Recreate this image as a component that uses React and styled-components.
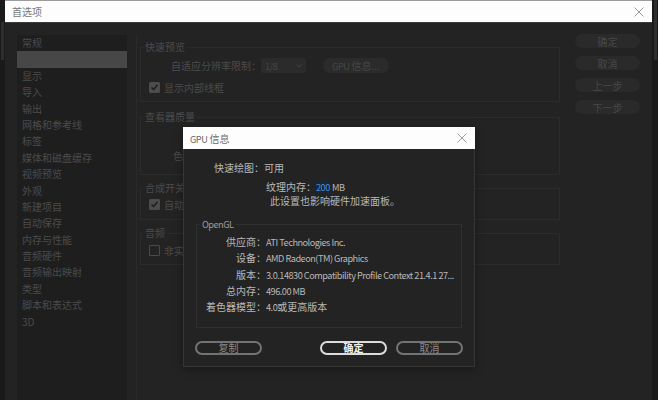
import React from "react";
import styled, { createGlobalStyle } from "styled-components";

const GlobalStyle = createGlobalStyle`
  html, body {
    margin: 0;
    padding: 0;
    background: #1b1b1b;
  }
  body {
    font-family: "Noto Sans CJK SC", "Noto Sans", sans-serif;
    font-size: 10px;
    overflow: hidden;
  }
`;

const navItems = [
    "常规", "预览", "显示", "导入", "输出", "网格和参考线", "标签", "媒体和磁盘缓存",
    "视频预览", "外观", "新建项目", "自动保存", "内存与性能", "音频硬件", "音频输出映射",
    "类型", "脚本和表达式", "3D",
];

const sideButtons = ["确定", "取消", "上一步", "下一步"];

// label, latin part, cjk part
const openGlRows = [
    ["供应商：", "ATI Technologies Inc.", ""],
    ["设备：", "AMD Radeon(TM) Graphics", ""],
    ["版本：", "3.0.14830 Compatibility Profile Context 21.4.1 27...", ""],
    ["总内存：", "496.00 MB", ""],
    ["着色器模型：", "4.0", "或更高版本"],
];

const CloseIcon = ({ color }) => (
    <svg width="10" height="10" viewBox="0 0 10 10">
        <path d="M0.5 0.5 L9.5 9.5 M9.5 0.5 L0.5 9.5" stroke={color} strokeWidth="1" fill="none" />
    </svg>
);

const Chevron = () => (
    <svg width="6" height="4" viewBox="0 0 6 4">
        <path d="M0.5 0.5 L3 3 L5.5 0.5" stroke="#444" strokeWidth="1" fill="none" />
    </svg>
);

const Check = ({ checked }) => (
    <CheckBox $checked={checked}>
        {checked && (
            <svg width="9" height="9" viewBox="0 0 9 9">
                <path d="M1.5 4.5 L3.6 6.6 L7.6 1.8" stroke="#1f1f1f" strokeWidth="1.6" fill="none" />
            </svg>
        )}
    </CheckBox>
);

const App = () => {
    return (
        <>
            <GlobalStyle />
            <Page>
                <Gutter $w={5}>
                    <GutterThumb $top={22} $h={38} />
                </Gutter>
                <Window>
                    <TitleBar>
                        <span>首选项</span>
                        <CloseIcon color="#9a9a9a" />
                    </TitleBar>
                    <Body>
                        <Sidebar>
                            {navItems.map((item, i) => (
                                <NavItem key={item} $active={i === 1}>
                                    {i === 1 ? "" : item}
                                </NavItem>
                            ))}
                        </Sidebar>
                        <Panel>
                            <Group $mb={8} $pb={7}>
                                <Legend>快速预览</Legend>
                                <FieldRow $mt={4}>
                                    <FieldLabel $w={112}>自适应分辨率限制：</FieldLabel>
                                    <Select>
                                        <Latin>1/8</Latin>
                                        <Chevron />
                                    </Select>
                                    <PillButton>
                                        <Latin>GPU</Latin>&nbsp;信息...
                                    </PillButton>
                                </FieldRow>
                                <CheckRow $mt={7}>
                                    <Check checked />
                                    <span>显示内部线框</span>
                                </CheckRow>
                            </Group>
                            <Group $mb={6} $pb={11}>
                                <Legend>查看器质量</Legend>
                                <FieldRow $mt={24}>
                                    <FieldLabel $w={64}>色彩管理</FieldLabel>
                                </FieldRow>
                            </Group>
                            <Group $mb={6} $pb={8}>
                                <Legend>合成开关</Legend>
                                <CheckRow $mt={2}>
                                    <Check checked />
                                    <span>自动切换</span>
                                </CheckRow>
                            </Group>
                            <Group $mb={0} $pb={7}>
                                <Legend>音频</Legend>
                                <CheckRow $mt={3}>
                                    <Check />
                                    <span>非实时预览</span>
                                </CheckRow>
                            </Group>
                        </Panel>
                        <SideButtons>
                            {sideButtons.map((b) => (
                                <SideButton key={b}>{b}</SideButton>
                            ))}
                        </SideButtons>
                    </Body>
                </Window>
                <Gutter $w={6}>
                    <GutterThumb $top={0} $h={60} />
                </Gutter>

                <Modal>
                    <ModalTitle>
                        <span>
                            <Latin>GPU</Latin> 信息
                        </span>
                        <CloseIcon color="#a0a0a0" />
                    </ModalTitle>
                    <ModalBody>
                        <InfoGrid>
                            <InfoLabel>快速绘图：</InfoLabel>
                            <InfoValue>可用</InfoValue>
                        </InfoGrid>
                        <Indented>
                            <Line>
                                纹理内存：<Highlight>200</Highlight> <Latin>MB</Latin>
                            </Line>
                            <Note>此设置也影响硬件加速面板。</Note>
                        </Indented>
                        <GlGroup>
                            <GlLegend>
                                <Latin>OpenGL</Latin>
                            </GlLegend>
                            <InfoGrid $rows>
                                {openGlRows.map(([label, latin, cjk]) => (
                                    <React.Fragment key={label}>
                                        <InfoLabel>{label}</InfoLabel>
                                        <InfoValue>
                                            <Latin>{latin}</Latin>
                                            {cjk}
                                        </InfoValue>
                                    </React.Fragment>
                                ))}
                            </InfoGrid>
                        </GlGroup>
                        <ModalButtons>
                            <DialogButton>复制</DialogButton>
                            <ButtonPair>
                                <DialogButton $primary>确定</DialogButton>
                                <DialogButton>取消</DialogButton>
                            </ButtonPair>
                        </ModalButtons>
                    </ModalBody>
                </Modal>
            </Page>
        </>
    );
};

const Page = styled.div`
    position: relative;
    width: 658px;
    height: 400px;
    display: flex;
    overflow: hidden;
    background: #1b1b1b;
`;

const Latin = styled.span`
    font-size: 9.2px;
    letter-spacing: -0.5px;
`;

const Gutter = styled.div`
    width: ${(p) => p.$w}px;
    flex-shrink: 0;
    background: #1a1a1a;
    display: flex;
    flex-direction: column;
    align-items: center;
`;

const GutterThumb = styled.div`
    width: 3px;
    height: ${(p) => p.$h}px;
    margin-top: ${(p) => p.$top}px;
    background: #2e2e2e;
`;

const Window = styled.div`
    flex: 1;
    min-width: 0;
    display: flex;
    flex-direction: column;
`;

const TitleBar = styled.div`
    height: 23px;
    box-sizing: border-box;
    flex-shrink: 0;
    border-top: 1px solid #9c9c9c;
    border-bottom: 1px solid #3a3a3a;
    background: #fdfdfd;
    color: #777;
    display: flex;
    align-items: center;
    justify-content: space-between;
    padding: 0 8px 0 7px;
`;

const Body = styled.div`
    flex: 1;
    background: #232323;
    display: flex;
    align-items: flex-start;
    padding: 12px 12px 0 12px;
`;

const Sidebar = styled.ul`
    list-style: none;
    margin: 0;
    padding: 0;
    width: 110px;
    height: 380px;
    flex-shrink: 0;
    background: #1e1e1e;
`;

const NavItem = styled.li`
    height: 16.4px;
    line-height: 16.4px;
    padding-left: 5px;
    color: #4b4b4b;
    background: ${(p) => (p.$active ? "#474747" : "transparent")};
    white-space: nowrap;
`;

const Panel = styled.div`
    margin-left: 9px;
    align-self: stretch;
    border-left: 1px solid #2a2a2a;
    padding: 5px 0 0 3px;
    width: 420px;
    flex-shrink: 0;
`;

const Group = styled.fieldset`
    margin: 0 0 ${(p) => p.$mb}px;
    padding: 0 8px ${(p) => p.$pb}px 8px;
    border: 1px solid #2b2b2b;
    width: 420px;
    box-sizing: border-box;
    min-inline-size: 0;
`;

const Legend = styled.legend`
    padding: 0 2px;
    margin-left: -6px;
    color: #4b4b4b;
    line-height: 14px;
`;

const FieldRow = styled.div`
    margin-top: ${(p) => p.$mt}px;
    height: 15px;
    line-height: 12px;
    display: flex;
    align-items: center;
    color: #4b4b4b;
`;

const FieldLabel = styled.span`
    width: ${(p) => p.$w}px;
    text-align: right;
    white-space: nowrap;
`;

const Select = styled.div`
    width: ${(p) => p.$w || 45}px;
    height: 15px;
    box-sizing: border-box;
    background: #2b2b2b;
    border-radius: 2px;
    padding: 0 4px;
    display: flex;
    align-items: center;
    justify-content: space-between;
    color: #474747;
    white-space: nowrap;
`;

const PillButton = styled.div`
    margin-left: 17px;
    width: 66px;
    height: 15px;
    border-radius: 8px;
    background: #2b2b2b;
    color: #474747;
    display: flex;
    align-items: center;
    justify-content: center;
`;

const CheckRow = styled.div`
    margin-top: ${(p) => p.$mt}px;
    height: 14px;
    display: flex;
    align-items: center;
    gap: 4px;
    color: #4b4b4b;
    white-space: nowrap;
`;

const CheckBox = styled.span`
    width: 11px;
    height: 11px;
    box-sizing: border-box;
    border: 1px solid #4a4a4a;
    border-radius: 1px;
    background: ${(p) => (p.$checked ? "#4d4d4d" : "transparent")};
    display: flex;
    align-items: center;
    justify-content: center;
`;

const SideButtons = styled.div`
    margin-left: 15px;
    margin-top: -1px;
    display: flex;
    flex-direction: column;
    gap: 8px;
`;

const SideButton = styled.div`
    width: 65px;
    height: 14px;
    border-radius: 7px;
    background: #2a2a2a;
    color: #484848;
    display: flex;
    align-items: center;
    justify-content: center;
`;

const Modal = styled.div`
    position: absolute;
    left: 183px;
    top: 127px;
    width: 292px;
    box-shadow: 0 2px 8px rgba(0, 0, 0, 0.35);
`;

const ModalTitle = styled.div`
    height: 22px;
    background: #fdfdfd;
    color: #6b6b6b;
    display: flex;
    align-items: center;
    justify-content: space-between;
    padding: 0 8px 0 7px;
`;

const ModalBody = styled.div`
    background: #232323;
    border: 1px solid #363636;
    border-top: none;
    padding: 12px 11px 11px 11px;
    color: #b8b8b8;
`;

const InfoGrid = styled.div`
    display: grid;
    grid-template-columns: 69px 1fr;
    grid-auto-rows: ${(p) => (p.$rows ? "16.25px" : "14px")};
    align-items: center;
    padding-top: ${(p) => (p.$rows ? 3 : 0)}px;
    white-space: nowrap;
    line-height: 14px;
`;

const InfoLabel = styled.span`
    text-align: right;
`;

const InfoValue = styled.span`
    overflow: hidden;
`;

const Indented = styled.div`
    margin: 5px 0 0 71px;
`;

const Line = styled.div`
    height: 14px;
    line-height: 14px;
    white-space: nowrap;
`;

const Note = styled(Line)`
    padding-left: 4px;
`;

const Highlight = styled(Latin)`
    color: #3a8fe2;
    background: #1d2530;
`;

const GlGroup = styled.fieldset`
    margin: 9px 1px 0;
    padding: 0 0 12px 0;
    border: 1px solid #2f2f2f;
    min-inline-size: 0;
`;

const GlLegend = styled.legend`
    margin-left: 3px;
    padding: 0 2px;
    line-height: 14px;
    color: #9c9c9c;
`;

const ModalButtons = styled.div`
    margin-top: 13px;
    display: flex;
    justify-content: space-between;
`;

const ButtonPair = styled.div`
    display: flex;
    gap: 9px;
`;

const DialogButton = styled.div`
    width: 67px;
    height: 14px;
    box-sizing: border-box;
    border: 2px solid ${(p) => (p.$primary ? "#dcdcdc" : "#737373")};
    border-radius: 7px;
    color: ${(p) => (p.$primary ? "#f2f2f2" : "#8a8a8a")};
    font-weight: ${(p) => (p.$primary ? "bold" : "normal")};
    display: flex;
    align-items: center;
    justify-content: center;
    line-height: 10px;
`;

export default App;
